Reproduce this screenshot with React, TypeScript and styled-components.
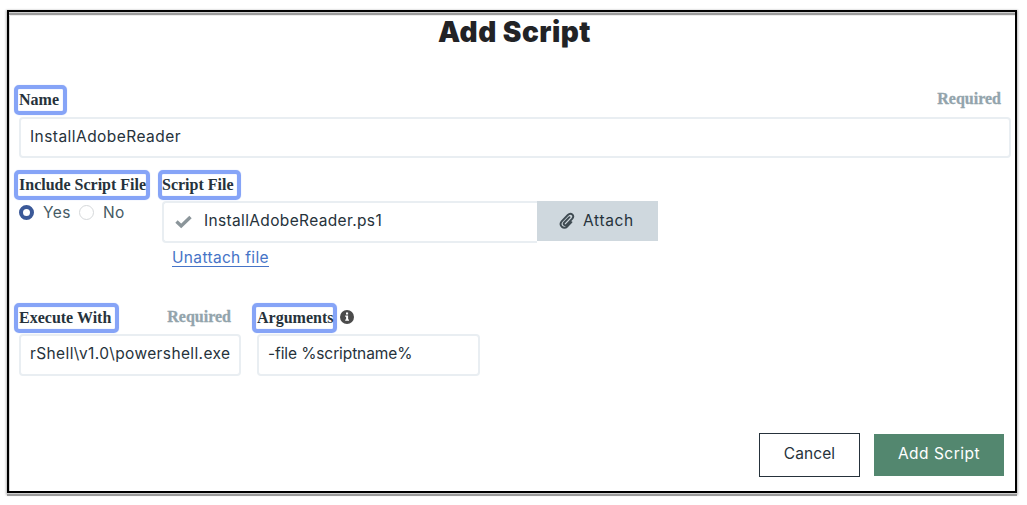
import React from "react";
import styled, { createGlobalStyle } from "styled-components";

const GlobalStyle = createGlobalStyle`
  * { box-sizing: border-box; }
  body { margin: 0; background: #fff; }
  button, input { font: inherit; }
`;

const Page = styled.div`
  min-height: 100vh;
  padding: 10px 0 0 7px;
  background: #fff;
`;

const Dialog = styled.main`
  width: 1010px;
  height: 483px;
  padding-left: 5px;
  border: 2px solid #000;
  background: #fff;
  color: #26323b;
  font-family: Inter, "Noto Sans", sans-serif;
  font-size: 15.5px;
  box-shadow:
    0 1px 0 0 #cfcfcf,
    0 3px 0 0 #9b9b9b,
    0 1px 2px 1px #bbb,
    inset 0 1px 0 #cfcfcf,
    inset 0 3px 0 #9b9b9b,
    inset 0 4px 0 #ececec,
    inset 1px 0 0 #d5d5d5;
`;

const Title = styled.h1`
  height: 73px;
  margin: 0;
  padding-top: 3px;
  text-align: center;
  color: #222326;
  font-size: 28px;
  line-height: 34px;
  font-weight: 900;
  letter-spacing: 0.5px;
`;

const Row = styled.div<{ $gap?: number; $height: number }>`
  display: flex;
  gap: ${(p) => p.$gap ?? 0}px;
  height: ${(p) => p.$height}px;
`;

const Field = styled.div<{ $width: number }>`
  display: flex;
  flex-direction: column;
  flex: none;
  width: ${(p) => p.$width}px;
`;

const FieldHeader = styled.div`
  display: flex;
  height: 30px;
`;

const Label = styled.label<{ $width: number; $indent?: number }>`
  flex: none;
  width: ${(p) => p.$width}px;
  height: 30px;
  padding-left: ${(p) => p.$indent ?? 1}px;
  border: 4px solid #86a4f7;
  border-radius: 5px;
  box-shadow: inset 0 0 1px #9fb8f8, 0 0 1px #a9c0fa;
  font: bold 16px/21px "Liberation Serif", serif;
  white-space: nowrap;
`;

const Required = styled.span`
  margin: 4px 10px 0 auto;
  color: #93a4ac;
  font: bold 16px/20px "Liberation Serif", serif;
  -webkit-text-stroke: 0.3px #93a4ac;
`;

const TextInput = styled.input<{ $width: number; $height: number; $top: number; $spacing: number }>`
  width: ${(p) => p.$width}px;
  height: ${(p) => p.$height}px;
  margin: ${(p) => p.$top}px 0 0 5px;
  padding: 0 9px 3px;
  border: 2px solid #e9eef2;
  border-radius: 4px;
  outline: none;
  color: #26323b;
  background: #fff;
  letter-spacing: ${(p) => p.$spacing}px;
`;

const RadioGroup = styled.div`
  display: flex;
  align-items: center;
  height: 24px;
  padding-left: 5px;
`;

const RadioOption = styled.label<{ $width: number }>`
  display: flex;
  align-items: center;
  gap: 9px;
  width: ${(p) => p.$width}px;
  color: #455a64;
  letter-spacing: 0.4px;
`;

const Radio = styled.input`
  appearance: none;
  flex: none;
  width: 15px;
  height: 15px;
  margin: 1px 0 0;
  border: 1px solid #d5d8da;
  border-radius: 50%;
  background: #fff;
  &:checked { border: 4.5px solid #3b5998; }
`;

const FilePicker = styled.div`
  display: flex;
  margin: 1px 0 0 4px;
`;

const FileName = styled.div`
  display: flex;
  align-items: center;
  width: 375px;
  height: 42px;
  padding: 0 0 4px 11px;
  border: 2px solid #e9eef2;
  border-right: 0;
  border-radius: 4px 0 0 4px;
  letter-spacing: 0.35px;
  svg { margin: 3px 12px 0 0; }
`;

const AttachButton = styled.button`
  display: flex;
  align-items: center;
  width: 121px;
  height: 40px;
  padding: 0 0 1px 22px;
  border: 0;
  background: #cfd8de;
  color: #26323b;
  letter-spacing: 0.65px;
  svg { margin-right: 8px; }
`;

const UnattachLink = styled.a`
  align-self: flex-start;
  margin: 6px 0 0 14px;
  border-bottom: 1px solid #4674c7;
  color: #4674c7;
  line-height: 17px;
  letter-spacing: 0.33px;
`;

const InfoIcon = styled.svg`
  margin: 7px 0 0 3px;
`;

const Actions = styled.footer`
  display: flex;
  align-items: center;
  justify-content: flex-end;
  gap: 14px;
  height: 44px;
  padding-right: 11px;
`;

const ActionButton = styled.button<{ $primary?: boolean }>`
  width: ${(p) => (p.$primary ? 130 : 101)}px;
  height: ${(p) => (p.$primary ? 42 : 44)}px;
  padding: 0 0 3px;
  border: ${(p) => (p.$primary ? "0" : "1px solid #26323b")};
  background: ${(p) => (p.$primary ? "#53876f" : "#fff")};
  color: ${(p) => (p.$primary ? "#fff" : "#26323b")};
  letter-spacing: ${(p) => (p.$primary ? 0.5 : 0.1)}px;
`;

export default function App() {
  return (
    <Page>
      <GlobalStyle />
      <Dialog>
        <Title>Add Script</Title>
        <Row $height={85}>
          <Field $width={997}>
            <FieldHeader>
              <Label $width={53}>Name</Label>
              <Required>Required</Required>
            </FieldHeader>
            <TextInput $width={992} $height={41} $top={2} $spacing={0.45} defaultValue="InstallAdobeReader" />
          </Field>
        </Row>
        <Row $height={133} $gap={8}>
          <Field $width={136}>
            <FieldHeader>
              <Label $width={136}>Include Script File</Label>
            </FieldHeader>
            <RadioGroup>
              <RadioOption $width={60}>
                <Radio type="radio" name="include" defaultChecked />
                Yes
              </RadioOption>
              <RadioOption $width={60}>
                <Radio type="radio" name="include" />
                No
              </RadioOption>
            </RadioGroup>
          </Field>
          <Field $width={500}>
            <FieldHeader>
              <Label $width={83} $indent={0}>Script File</Label>
            </FieldHeader>
            <FilePicker>
              <FileName>
                <svg width="17" height="14" viewBox="0 0 17 14" fill="none" stroke="#8b959a" strokeWidth="3.4">
                  <path d="M1.5 6.5 6.2 11 15.5 2" />
                </svg>
                InstallAdobeReader.ps1
              </FileName>
              <AttachButton type="button">
                <svg width="16" height="18" viewBox="0 0 16 18" fill="none" stroke="#3f4b52" strokeWidth="1.9" strokeLinecap="round">
                  <path d="M10.5 5.2 5.3 10.5c-1.6 1.8.6 3.8 2.3 2.2l5.5-5.8c3-3.4-1.1-7-4.3-3.9L2.9 9.1C-.7 13.2 4.4 18.2 8.6 14.2l3.8-4" />
                </svg>
                Attach
              </AttachButton>
            </FilePicker>
            <UnattachLink>Unattach file</UnattachLink>
          </Field>
        </Row>
        <Row $height={130} $gap={11}>
          <Field $width={227}>
            <FieldHeader>
              <Label $width={105}>Execute With</Label>
              <Required>Required</Required>
            </FieldHeader>
            <TextInput $width={222} $height={42} $top={1} $spacing={0.38} defaultValue="rShell\v1.0\powershell.exe" />
          </Field>
          <Field $width={228}>
            <FieldHeader>
              <Label $width={85}>Arguments</Label>
              <InfoIcon width="14" height="14" viewBox="0 0 14 14">
                <circle cx="7" cy="7" r="7" fill="#4b4b4b" />
                <path d="M5.2 5.6h2.9v4h.9v1.2H5.2V9.6h.9V6.8h-.9zM6 2.6h2.1v2H6z" fill="#fff" />
              </InfoIcon>
            </FieldHeader>
            <TextInput $width={223} $height={42} $top={1} $spacing={-0.1} defaultValue="-file %scriptname%" />
          </Field>
        </Row>
        <Actions>
          <ActionButton type="button">Cancel</ActionButton>
          <ActionButton type="button" $primary>Add Script</ActionButton>
        </Actions>
      </Dialog>
    </Page>
  );
}
